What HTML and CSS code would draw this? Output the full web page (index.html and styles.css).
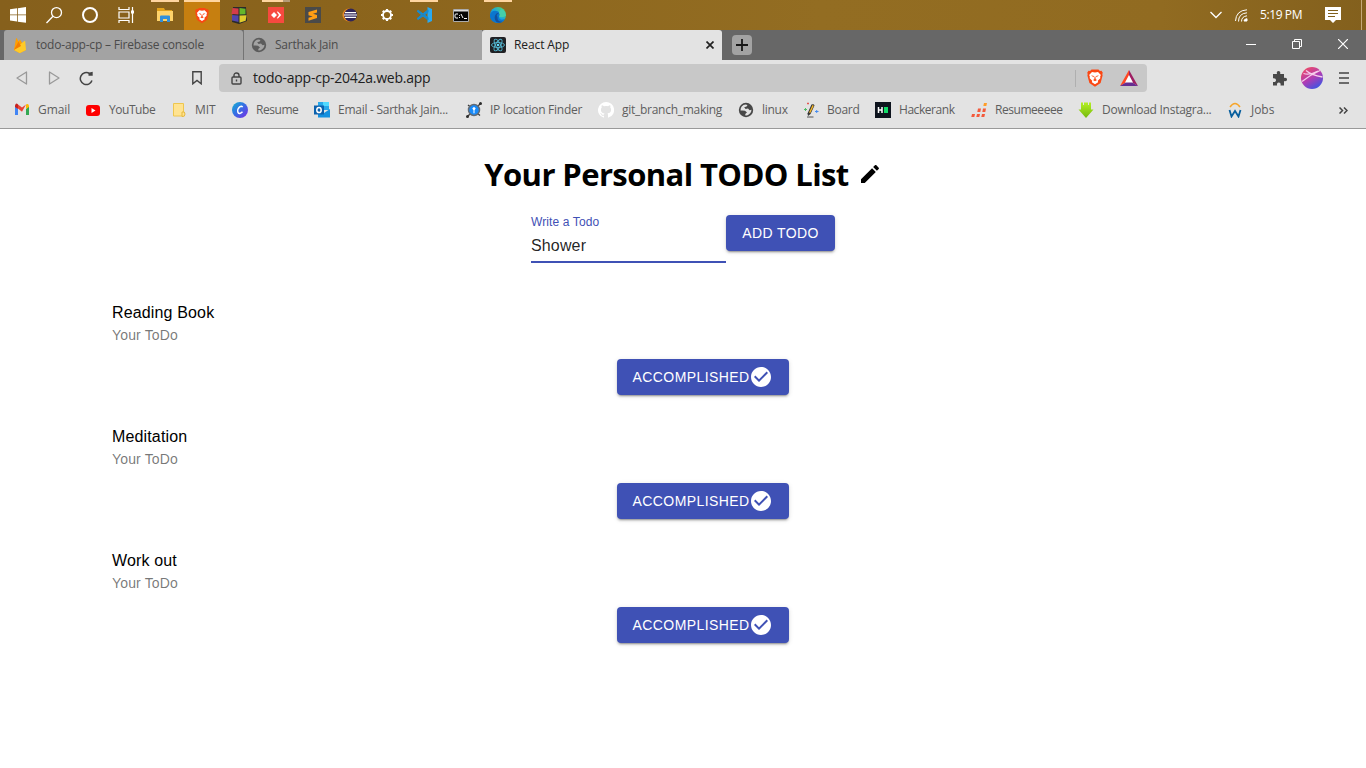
FILE: index.html
```html
<!DOCTYPE html>
<html lang="en">
<head>
<meta charset="utf-8">
<title>React App</title>
<link rel="stylesheet" href="styles.css">
</head>
<body>
<svg class="defs" width="0" height="0">
  <defs>
    <linearGradient id="edge" x1="0" y1="1" x2="1" y2="0"><stop offset="0" stop-color="#0b63c5"/><stop offset=".5" stop-color="#1aa7df"/><stop offset="1" stop-color="#61dc55"/></linearGradient>
    <linearGradient id="canva" x1="0" y1="0" x2="1" y2="1"><stop offset="0" stop-color="#13b5cf"/><stop offset=".45" stop-color="#3470e4"/><stop offset="1" stop-color="#7a2be5"/></linearGradient>
    <linearGradient id="avatar" x1=".2" y1="0" x2=".8" y2="1"><stop offset="0" stop-color="#f04b63"/><stop offset=".5" stop-color="#b03cb4"/><stop offset="1" stop-color="#3157e8"/></linearGradient>
    <linearGradient id="green" x1="0" y1="0" x2="0" y2="1"><stop offset="0" stop-color="#b4f024"/><stop offset="1" stop-color="#74b80c"/></linearGradient>
    <symbol id="globe" viewBox="0 0 16 16"><circle cx="8" cy="8" r="7.200" fill="currentColor"/><path d="M2.500 8.500C2.500 5 4.500 3 7.500 2.600L9.500 3 8.600 4.600 6.200 5.300 7.600 6.900 10 6.600 11.600 8.200 13.500 7.800C13.300 10.500 11.800 12.500 9 13.400L7 13.300 7.700 11.600 9 10.600 7 8.800 4.500 8.600Z" fill="var(--globe-land)"/></symbol>
    <symbol id="lion" viewBox="0 0 16 18"><path d="M4.500.5h7l1.400 1.400 1.600-.2 1.300 2-.5 1.400.3 1.300-2 7.600L8 17.800 2.400 14 .4 6.400l.3-1.300-.5-1.400 1.300-2 1.600.2Z" fill="#fa4713"/><path d="M5 3 8 3.600l3-.6 2.900 3.100-.7 1.200.1 2-2.500 2.400.3 1.500L8 15.300l-3.100-2.100.3-1.500-2.500-2.400.1-2-.7-1.200Z" fill="#fff"/><path d="m4 6.300 2.900.8-.4 1.200Zm8 0-2.900.8.4 1.200ZM7.600 7.500h.8l.3 2.700 1.300.7-2 1.300-2-1.300 1.300-.7Z" fill="#fa4713"/></symbol>
    <symbol id="check" viewBox="0 0 24 24"><path fill="currentColor" d="M12 2C6.480 2 2 6.480 2 12s4.480 10 10 10 10-4.480 10-10S17.520 2 12 2zm-2 15-5-5 1.410-1.410L10 14.170l7.590-7.590L19 8l-9 9z"/></symbol>
  </defs>
</svg>

<header class="taskbar">
  <div class="launchers">
    <span class="sys"><svg width="16" height="16" viewBox="0 0 16 16" fill="#fff"><path d="M0 2.300 7 1.300V7.500H0ZM7.800 1.200 16 0V7.500H7.800ZM0 8.300H7V14.600L0 13.600ZM7.800 8.300H16V15.800L7.800 14.700Z"/></svg></span>
    <span class="sys"><svg width="18" height="18" viewBox="0 0 18 18" fill="none" stroke="#fff" stroke-width="1.300"><circle cx="11.500" cy="6.600" r="5"/><path d="M8 10.200 1.500 17"/></svg></span>
    <span class="sys"><svg width="18" height="18" viewBox="0 0 18 18" fill="none" stroke="#fff" stroke-width="2"><circle cx="9" cy="9" r="7"/></svg></span>
    <span class="sys"><svg width="17" height="16" viewBox="0 0 17 16" fill="none" stroke="#fff" stroke-width="1.200"><path d="M1 0v2.500h10V0M1 16v-2.500h10V16M1 5h10v6H1ZM14.500 0v16"/><path d="M13 3.500h3v3h-3Z" fill="#fff" stroke="none"/></svg></span>
    <span class="app running first"><svg width="18" height="16" viewBox="0 0 18 16"><path d="M1 1h7l1 2h7v4H1Z" fill="#e3a21b"/><path d="M1 4h16v10H1Z" fill="#ffd36a"/><path d="M4 15V9.500q0-1 1-1h8q1 0 1 1V15h-3v-3H7v3Z" fill="#318fd9"/></svg></span>
    <span class="app current"><svg width="14" height="17"><use href="#lion"/></svg></span>
    <span class="app"><svg width="16" height="17" viewBox="0 0 16 17"><path d="M2 0h13l1 14-8 3-7-2Z" fill="#292b2b"/><path d="m1.500 1 6 .5v6l-7-.5Z" fill="#d43d49"/><path d="m8.500 1 6 .7v5.500l-6 .3Z" fill="#65b62b"/><path d="m1 8 6.500.5V15L1 13.500Z" fill="#5246ac"/><path d="m8.500 8.500 7-.3-.8 5.500-6.200 2Z" fill="#dfcb2c"/></svg></span>
    <span class="app running split"><svg width="16" height="16" viewBox="0 0 16 16"><path fill="#f7493f" d="M0 0h16v16H0Z"/><path fill="#fff" d="m6 5 3 3-3 3-3-3Zm2.800-.2L9.900 4.500 13.300 8l-3.400 3.500-1.100-.3L11 8Z"/></svg></span>
    <span class="app"><svg width="16" height="16" viewBox="0 0 16 16"><path fill="#4a4a49" d="M0 0h16v16H0Z"/><path fill="#ff9d14" d="M3.500 5 12 2.500v3L8 6.800l4 1.300v3l-8.500 2.700v-3l4.200-1.300-4.200-1.200Z"/></svg></span>
    <span class="app"><svg width="16" height="16" viewBox="0 0 16 16"><circle cx="7" cy="8" r="6.500" fill="#e88924"/><circle cx="8.600" cy="8" r="6.500" fill="#302559"/><path d="M3 5.700h11M2 8h13M3 10.300h11" stroke="#fff" stroke-width="1.200"/></svg></span>
    <span class="app"><svg width="14" height="14" viewBox="0 0 14 14" fill="none" stroke="#fff"><circle cx="7" cy="7" r="4" stroke-width="1.800"/><path d="M7 1v2M7 11v2M1 7h2M11 7h2M2.800 2.800l1.400 1.400M9.800 9.800l1.400 1.400M2.800 11.200l1.400-1.400M9.800 4.200l1.400-1.400" stroke-width="2.200"/></svg></span>
    <span class="app running"><svg width="16" height="16" viewBox="0 0 16 16"><path d="M11.500 0 16 2v12l-4.500 2V0Z" fill="#29a9f1"/><path d="M1 4.200 12 13v-2.500L2.200 3.300ZM1 11.600 12 2.800v2.500L2.200 12.500Z" stroke="#168bd0" stroke-width="1" fill="#168bd0"/></svg></span>
    <span class="app"><svg width="16" height="13" viewBox="0 0 16 13"><path d="M.5.500h15v12H.5Z" stroke="#aaa" fill="#050505"/><path d="M1 1h14v1.500H1Z" fill="#ddd"/><path d="M5 5H3Q2 5 2 6v2q0 1 1 1h2M6.500 6v.8M6.500 8v1M8 5l2 4M11 9.500h3" stroke="#fff" fill="none"/></svg></span>
    <span class="app running"><svg width="16" height="16" viewBox="0 0 16 16"><circle cx="8" cy="8" r="8" fill="url(#edge)"/><path d="M0 8C1 3 7 2.500 9.500 6 11 9 8.500 9 9 11q1.500 3 6 .7Q13 16 8 16-.5 15 0 8Z" fill="#0b76ce"/><path d="M6 7q-3 4 .5 8 3 1.500 6-.2Q7 15 7.500 10 5.500 8 9 6.300 7.500 5.500 6 7Z" fill="#144f9b"/><path d="M9 6q1.500 1.500 0 3.500 2 2 7-.8 0-3.700-3-6.200Q10 1.500 9 6Z" fill="#45cfaa"/></svg></span>
  </div>
  <div class="tray">
    <svg width="12" height="8" viewBox="0 0 12 8" fill="none" stroke="#fff" stroke-width="1.300"><path d="m.5 1 5.500 5.500L11.500 1"/></svg>
    <svg class="wifi" width="13" height="13" viewBox="0 0 13 13" fill="none" stroke="#fff" stroke-width="1"><path d="M.5 12Q1 1.500 12 .8M3.500 12.500Q3.500 4.500 12 3.800M6.500 12.500Q6.500 7.500 12 6.800"/><path d="M9 12q0-2 3-2.300V12Z" fill="#fff"/></svg>
    <span class="clock">5:19 PM</span>
    <svg class="note" width="16" height="16" viewBox="0 0 16 16"><path d="M0 0h16v13h-5l-3 3-3-3H0Z" fill="#fff"/><path d="M3 3.500h10M3 6.500h10M3 9.500h7" stroke="#80601d"/></svg>
  </div>
</header>

<nav class="tabs">
  <div class="tab"><svg width="16" height="16" viewBox="0 0 16 16"><path d="M2 13 4 1.500q.4-.8.9 0L6.500 4.500 7.500 3q.5-.5.9 0L14 13l-5.500 2.700q-.8.400-1.500 0Z" fill="#ffa000"/><path d="m2 13 8.500-7.500L12.500 4q.6-.4.7.3L14 13l-5.500 2.700q-.8.400-1.500 0Z" fill="#ffca28"/><path d="m2 13 4.500-8.500L9 9Z" fill="#f57c00"/></svg><span class="label t1">todo-app-cp – Firebase console</span></div>
  <div class="tab second"><svg class="globe" width="16" height="16"><use href="#globe"/></svg><span class="label t2">Sarthak Jain</span></div>
  <div class="tab active"><svg width="16" height="16" viewBox="0 0 16 16"><rect width="16" height="16" rx="2" fill="#202124"/><g fill="none" stroke="#55b9d3" stroke-width=".9"><ellipse cx="8" cy="8" rx="6.500" ry="2.500"/><ellipse cx="8" cy="8" rx="6.500" ry="2.500" transform="rotate(60 8 8)"/><ellipse cx="8" cy="8" rx="6.500" ry="2.500" transform="rotate(120 8 8)"/></g><circle cx="8" cy="8" r="1.300" fill="#61dafb"/></svg><span class="label t3">React App</span><svg class="close" width="8" height="8" viewBox="0 0 8 8" stroke="#222" stroke-width="1.700"><path d="m.5.500 7 7M7.500.500l-7 7"/></svg></div>
  <div class="newtab"><svg width="12" height="12" viewBox="0 0 12 12" stroke="#171717" stroke-width="1.800"><path d="M6 0v12M0 6h12"/></svg></div>
  <div class="window">
    <svg width="10" height="10" viewBox="0 0 10 10" stroke="#fff"><path d="M0 5.500h10"/></svg>
    <svg width="10" height="10" viewBox="0 0 10 10" stroke="#fff" fill="none"><path d="M.5 2.500h7v7h-7ZM2.500 2.500v-2h7v7h-2"/></svg>
    <svg width="10" height="10" viewBox="0 0 10 10" stroke="#fff" stroke-width="1.200"><path d="m0 0 10 10M10 0 0 10"/></svg>
  </div>
</nav>

<section class="toolbar">
  <div class="navigation">
    <svg width="12" height="14" viewBox="0 0 12 14" fill="none" stroke="#999" stroke-width="1.300" stroke-linejoin="round"><path d="M10.500 1v12L1 7Z"/></svg>
    <svg width="12" height="14" viewBox="0 0 12 14" fill="none" stroke="#999" stroke-width="1.300" stroke-linejoin="round"><path d="M1.500 1v12L11 7Z"/></svg>
    <svg class="reload" width="15" height="15" viewBox="0 0 15 15" fill="none" stroke="#444" stroke-width="1.500"><path d="M10.500 2.500A6 6 0 1 0 13 9.500"/><path d="M9.500 4.800V3l1-1.500L13.700.800V4.800Z" fill="#444" stroke="none"/></svg>
    <svg class="mark" width="10" height="14" viewBox="0 0 10 14" fill="none" stroke="#444" stroke-width="1.400"><path d="M.8.800h8.400v12L5 9.500.8 12.800Z"/></svg>
  </div>
  <div class="address">
    <svg width="11" height="13" viewBox="0 0 11 13" fill="none" stroke="#444" stroke-width="1.400"><rect x="1" y="5" width="9" height="7" rx="1"/><path d="M3 5V3.500Q3 1 5.500 1T8 3.500V5"/><path d="M5.500 7.500v2"/></svg>
    <span class="url">todo-app-cp-2042a.web.app</span>
    <span class="divider"></span>
    <svg class="shield" width="16" height="18"><use href="#lion"/></svg>
    <svg class="bat" width="18" height="16" viewBox="0 0 18 16"><path d="M9 0 0 16 9 10.500Z" fill="#ff4724"/><path d="m9 0 9 16-9-5.500Z" fill="#9e1f63"/><path d="m0 16 9-5.500 9 5.500Z" fill="#662d91"/><path d="m9 5-4 7.500h8Z" fill="#fff"/></svg>
  </div>
  <div class="extras">
    <svg width="15" height="15" viewBox="0 0 15 15"><path fill="#484848" d="M1 3h4C4.300 1 5.300 0 6.500 0S8.800 1 8.200 3H12v4c2-.6 3 .3 3 1.500S14 10.600 12 10v4.500H8.500c.6-2-.4-3-1.700-3s-2.200 1-1.700 3H1V11c2 .4 3-.6 3-1.800S3 7 1 7.300Z"/></svg>
    <svg class="avatar" width="22" height="22" viewBox="0 0 22 22"><circle cx="11" cy="11" r="11" fill="url(#avatar)"/><path d="M1 14.500Q9 8 19 3.500M5 3.500q5 4.500 16.500 6.500M2.500 6.500Q9 8.500 17 4" fill="none" stroke="#f6ccec" stroke-width="1.300"/></svg>
    <svg class="menu" width="10" height="12" viewBox="0 0 10 12" stroke="#444" stroke-width="1.500"><path d="M0 1h10M0 6h10M0 11h10"/></svg>
  </div>
</section>

<section class="bookmarks">
  <div class="bookmark"><svg viewBox="0 0 16 16"><path d="M1 4v9h3V7Z" fill="#4285f4"/><path d="M15 4v9h-3V7Z" fill="#34a853"/><path d="m1 4 3-1.500 4 3 4-3L8 9.700Z" fill="#ea4335"/><path d="M4 2.500V7L1 5V3.500Q2-.1 4 2.500Z" fill="#c5221f"/><path d="M12 2.500V7l3-2V3.500q-1-2.200-3-1Z" fill="#fbbc04"/></svg><span class="bm loose">Gmail</span></div>
  <div class="bookmark"><svg viewBox="0 0 16 16"><rect x="1" y="3" width="14" height="11" rx="3" fill="#f00"/><path d="m6.500 6 4 2.500-4 2.500Z" fill="#fff"/></svg><span class="bm tight">YouTube</span></div>
  <div class="bookmark"><svg viewBox="0 0 16 16"><path d="M2.500 1.500h10V14h-10Z" fill="#ffe391" stroke="#eec64e"/><path d="M11 10q3-1 3 2t-3 2.500Z" fill="#ffe391" stroke="#e7b93d"/></svg><span class="bm loose">MIT</span></div>
  <div class="bookmark"><svg viewBox="0 0 16 16"><circle cx="8" cy="8" r="8" fill="url(#canva)"/><path d="M10.500 5.200Q10 3.300 7.700 4.800 5 7.200 6 10.500q1.500 2.200 4.500-.8" fill="none" stroke="#fff" stroke-width="1.500"/></svg><span class="bm tight">Resume</span></div>
  <div class="bookmark"><svg viewBox="0 0 16 16"><path d="M4 0h11v8H4Z" fill="#28a8ea"/><path d="M9 0h6v4H9Z" fill="#50d9ff"/><path d="m4 7 6 4 6-4v8.500H4Z" fill="#1490df"/><path d="M0 3.500h10v9H0Z" fill="#0c61ad"/><ellipse cx="5" cy="8" rx="2.200" ry="2.600" stroke="#fff" stroke-width="1.500" fill="none"/></svg><span class="bm">Email - Sarthak Jain...</span></div>
  <div class="bookmark"><svg viewBox="0 0 16 16"><path d="m2 3 2.500 2M11 5l4-4M1 15l4-4m6 0 3 2.500" stroke="#3b3b3b" stroke-width="1.300"/><circle cx="14.500" cy="1.500" r="1.500" fill="#2e2e2e"/><circle cx="1.500" cy="14.500" r="1.500" fill="#2e2e2e"/><circle cx="8" cy="8" r="5.500" fill="#188bfa" stroke="#626b75" stroke-width="1.500"/><path d="M6.300 6.500Q8 3.500 9.700 6.500L8.500 8.300v3h-1v-3Z" fill="#fff"/></svg><span class="bm">IP location Finder</span></div>
  <div class="bookmark"><svg viewBox="0 0 16 16"><path fill="#fff" d="M8 0a8 8 0 0 0-2.530 15.590c.4.070.550-.170.550-.380v-1.500c-2.230.490-2.700-.940-2.700-.940-.360-.930-.890-1.170-.890-1.170-.730-.500.050-.490.050-.490.800.060 1.230.830 1.230.830.720 1.220 1.880.870 2.330.660.070-.520.280-.870.510-1.070-1.780-.200-3.640-.890-3.640-3.950 0-.870.310-1.590.820-2.150-.080-.200-.360-1.020.080-2.120 0 0 .670-.210 2.200.820A7.600 7.600 0 0 1 8 3.900c.680 0 1.360.090 2 .260 1.530-1.040 2.200-.820 2.200-.820.440 1.100.160 1.920.080 2.120.510.560.820 1.270.820 2.150 0 3.070-1.870 3.750-3.650 3.950.290.250.540.730.540 1.480v2.200c0 .210.150.460.550.380A8 8 0 0 0 8 0Z"/></svg><span class="bm">git_branch_making</span></div>
  <div class="bookmark"><svg class="dark-globe"><use href="#globe"/></svg><span class="bm">linux</span></div>
  <div class="bookmark"><svg viewBox="0 0 16 16"><path d="M4.500 11.500 8.500 2.500q2.500-1 3 1L7.500 12 5 14Z" fill="#343434"/><path d="M6 10.500 9.500 3l1.300.7L7.300 11Z" fill="#f5b728"/><path d="M4 15h6.500" stroke="#555"/><path d="M4 1.500h2M5 .5v2" stroke="#e45652"/><path d="M1 7.500h3M2.500 6v3" stroke="#4fbb66"/><path d="M12 9.500h3.500M13.700 8v3" stroke="#478df0"/></svg><span class="bm">Board</span></div>
  <div class="bookmark"><svg viewBox="0 0 16 16"><path fill="#0e141e" d="M0 0h16v16H0Z"/><path d="M3.500 5v6M7 5v6M4 8h3" stroke="#fff" stroke-width="1.500"/><path fill="#12dd68" d="M9 5h4v6H9Z"/></svg><span class="bm tight">Hackerank</span></div>
  <div class="bookmark"><svg viewBox="0 0 16 16"><path fill="#f45a3c" d="M1 12h3l-.7 3H.3Zm5 0h3l-.7 3h-3Zm5 0h3l-.7 3h-3ZM7 6.500h3l-.7 3.500h-3Zm5 0h3l-.7 3.500h-3Z"/><path d="M13 1h3l-.7 3h-3Z" fill="#ff9d28"/></svg><span class="bm tight">Resumeeeee</span></div>
  <div class="bookmark"><svg viewBox="0 0 16 16"><path d="M3 .5h10v7h2.500L8 16 .5 7.500H3Z" fill="url(#green)"/><path d="M5.500 0v3M10.500 0v3" stroke="#e3e3e3"/></svg><span class="bm">Download Instagra...</span></div>
  <div class="bookmark"><svg viewBox="0 0 16 16"><path d="M3 5q5-7 10 0" fill="none" stroke="#f7a52a" stroke-width="1.500"/><path d="m2.500 8 2 6.500L8 9l3.500 5.500 2-6.500" fill="none" stroke="#075e9d" stroke-width="1.800"/></svg><span class="bm loose">Jobs</span></div>
  <svg class="more" width="9" height="7" viewBox="0 0 9 7" fill="none" stroke="#444" stroke-width="1.500"><path d="m.5.500 3 3-3 3m4.500-6 3 3-3 3"/></svg>
</section>

<main class="page">
  <h1 class="title"><span class="title-text">Your Personal TODO List</span><svg width="24" height="24" viewBox="0 0 24 24"><path d="M3 17.250V21h3.750L17.810 9.940l-3.750-3.750L3 17.250zM20.710 7.040c.390-.390.390-1.020 0-1.410l-2.340-2.340c-.390-.390-1.020-.390-1.410 0l-1.830 1.830 3.750 3.750 1.830-1.830z"/></svg></h1>
  <form class="entry"><div class="field"><label for="todo">Write a Todo</label><input id="todo" value="Shower"></div><button class="button" type="button">ADD TODO</button></form>
  <ul class="list">
    <li class="item"><p class="name">Reading Book</p><p class="note-text">Your ToDo</p><button class="button done" type="button"><span>ACCOMPLISHED</span><svg width="24" height="24"><use href="#check"/></svg></button></li>
    <li class="item"><p class="name">Meditation</p><p class="note-text">Your ToDo</p><button class="button done" type="button"><span>ACCOMPLISHED</span><svg width="24" height="24"><use href="#check"/></svg></button></li>
    <li class="item"><p class="name">Work out</p><p class="note-text">Your ToDo</p><button class="button done" type="button"><span>ACCOMPLISHED</span><svg width="24" height="24"><use href="#check"/></svg></button></li>
  </ul>
</main>
</body>
</html>
```

FILE: styles.css
```css
* { box-sizing: border-box; }
body { margin: 0; height: 768px; overflow: hidden; background: #fff; font-family: "Liberation Sans", Arial, sans-serif; }
svg { display: block; flex: none; }
.defs { position: absolute; }

.taskbar { display: flex; justify-content: space-between; height: 30px; background: linear-gradient(90deg, #86601c, #8b641c 25%, #936d22 60%, #916b21 85%, #83601d); border-right: 0; font-family: "Open Sans", sans-serif; }
.launchers { display: flex; }
.sys, .app { display: flex; align-items: center; justify-content: center; width: 36px; height: 30px; }
.app { margin-right: 1px; background: linear-gradient(#ffd5a0, #ffd5a0) center top / 0 2px no-repeat; }
.first { margin-left: 3px; }
.running { background-size: 28px 2px; }
.current { background-color: #c67f10; background-size: 36px 2px; }
.split { background-image: linear-gradient(90deg, #ffd5a0 75%, #b49b76 75%); }
.tray { display: flex; align-items: center; width: 156px; margin-right: 0; background: linear-gradient(#c3a878, #c3a878) 151px 0 / 1px 30px no-repeat; }
.wifi { margin-left: 13px; }
.clock { width: 43px; margin: -2px 21px 0 12px; color: #fff; font-size: 12px; letter-spacing: -.4px; white-space: nowrap; }
.note { margin-left: 1px; }

.tabs { display: flex; height: 30px; padding-left: 4px; background: #676767; }
.tab { display: flex; align-items: center; gap: 8px; width: 239px; padding: 0 8px; background: #a3a3a3; border-radius: 3px 3px 0 0; color: #4b4b4b; font: 12px "Open Sans", sans-serif; }
.tab.second { width: 239px; border-left: 1px solid #747474; border-radius: 0; padding-left: 7px; }
.tab.active { width: 240px; background: #e3e3e3; color: #202020; }
.label { margin-top: -1px; white-space: nowrap; }
.t1 { letter-spacing: -.2px; }
.t2 { letter-spacing: -.25px; }
.t3 { letter-spacing: -.1px; }
.close { margin-left: auto; }
.globe { color: #5c5c5c; --globe-land: #a3a3a3; }
.newtab { display: flex; align-items: center; justify-content: center; width: 20px; height: 20px; margin: 5px 0 0 10px; border-radius: 4px; background: #a3a3a3; }
.window { display: flex; gap: 36px; align-items: center; margin-left: auto; padding: 0 18px 2px 0; }

.toolbar { display: flex; align-items: center; height: 36px; background: #e3e3e3; }
.navigation { display: flex; align-items: center; width: 219px; gap: 20px; padding-left: 16px; }
.reload { margin-left: -1px; }
.mark { margin-left: 78px; }
.address { display: flex; align-items: center; width: 928px; height: 28px; padding: 0 10px 0 12px; background: #c8c8c8; border-radius: 4px; }
.url { margin: -2px 0 0 11px; color: #202020; font: 14px "Open Sans", sans-serif; letter-spacing: -.24px; white-space: nowrap; }
.divider { width: 1px; height: 17px; margin-left: auto; background: #afafaf; }
.shield { margin-left: 11px; }
.bat { margin: 0 -1px 0 17px; }
.extras { display: flex; align-items: center; padding-left: 125px; }
.avatar { margin-left: 14px; }
.menu { margin-left: 16px; }

.bookmarks { display: grid; grid-template-columns: 71px 86px 61px 82px 152px 132px 140px 65px 72px 96px 107px 149px 112px auto; align-items: center; height: 33px; padding: 0 0 4px 14px; background: #e3e3e3; border-bottom: 1px solid #999; }
.bookmark { display: flex; align-items: center; gap: 8px; color: #5e5e5e; font: 12px "Open Sans", sans-serif; white-space: nowrap; }
.bookmark svg { width: 16px; height: 16px; }
.bm { margin-top: -1px; letter-spacing: -.27px; }
.tight { letter-spacing: -.45px; }
.loose { letter-spacing: -.05px; }
.bookmark .dark-globe { color: #484848; --globe-land: #e3e3e3; }
.more { margin-top: 1px; }

.page { padding-top: 23px; }
.title { display: flex; justify-content: center; align-items: center; gap: 9px; height: 43px; margin: 0; font: bold 31px "Open Sans", sans-serif; white-space: nowrap; }
.title-text { letter-spacing: -.6px; }
.entry { display: flex; justify-content: center; align-items: flex-start; margin: 20px 0 0; }
.field { display: flex; flex-direction: column; width: 195px; height: 48px; border-bottom: 2px solid #3f51b5; }
.field label { height: 16px; color: #3f51b5; font-size: 12px; line-height: 14px; letter-spacing: .11px; }
.field input { width: 100%; height: 30px; padding: 6px 0 7px; border: 0; outline: 0; background: none; color: rgba(0,0,0,.87); font: 16px "Liberation Sans", Arial, sans-serif; letter-spacing: .15px; }
.button { display: flex; align-items: center; justify-content: center; width: 109px; height: 36px; padding: 6px 16px; border: 0; border-radius: 4px; background: #3f51b5; color: #fff; box-shadow: 0 3px 1px -2px rgba(0,0,0,.2), 0 2px 2px rgba(0,0,0,.14), 0 1px 5px rgba(0,0,0,.12); font: 14px/24px "Liberation Sans", Arial, sans-serif; letter-spacing: .4px; white-space: nowrap; }
.list { display: flex; flex-direction: column; gap: 29px; margin: 38px 0 0; padding: 0 112px; list-style: none; }
.item { height: 95px; }
.name, .note-text { margin: 0; }
.name { height: 24px; color: #000; font-size: 16px; line-height: 24px; letter-spacing: .15px; }
.note-text { height: 20px; color: rgba(0,0,0,.54); font-size: 14px; line-height: 20px; letter-spacing: .15px; }
.done { width: 172px; margin: 14px 0 0 505px; }
```
